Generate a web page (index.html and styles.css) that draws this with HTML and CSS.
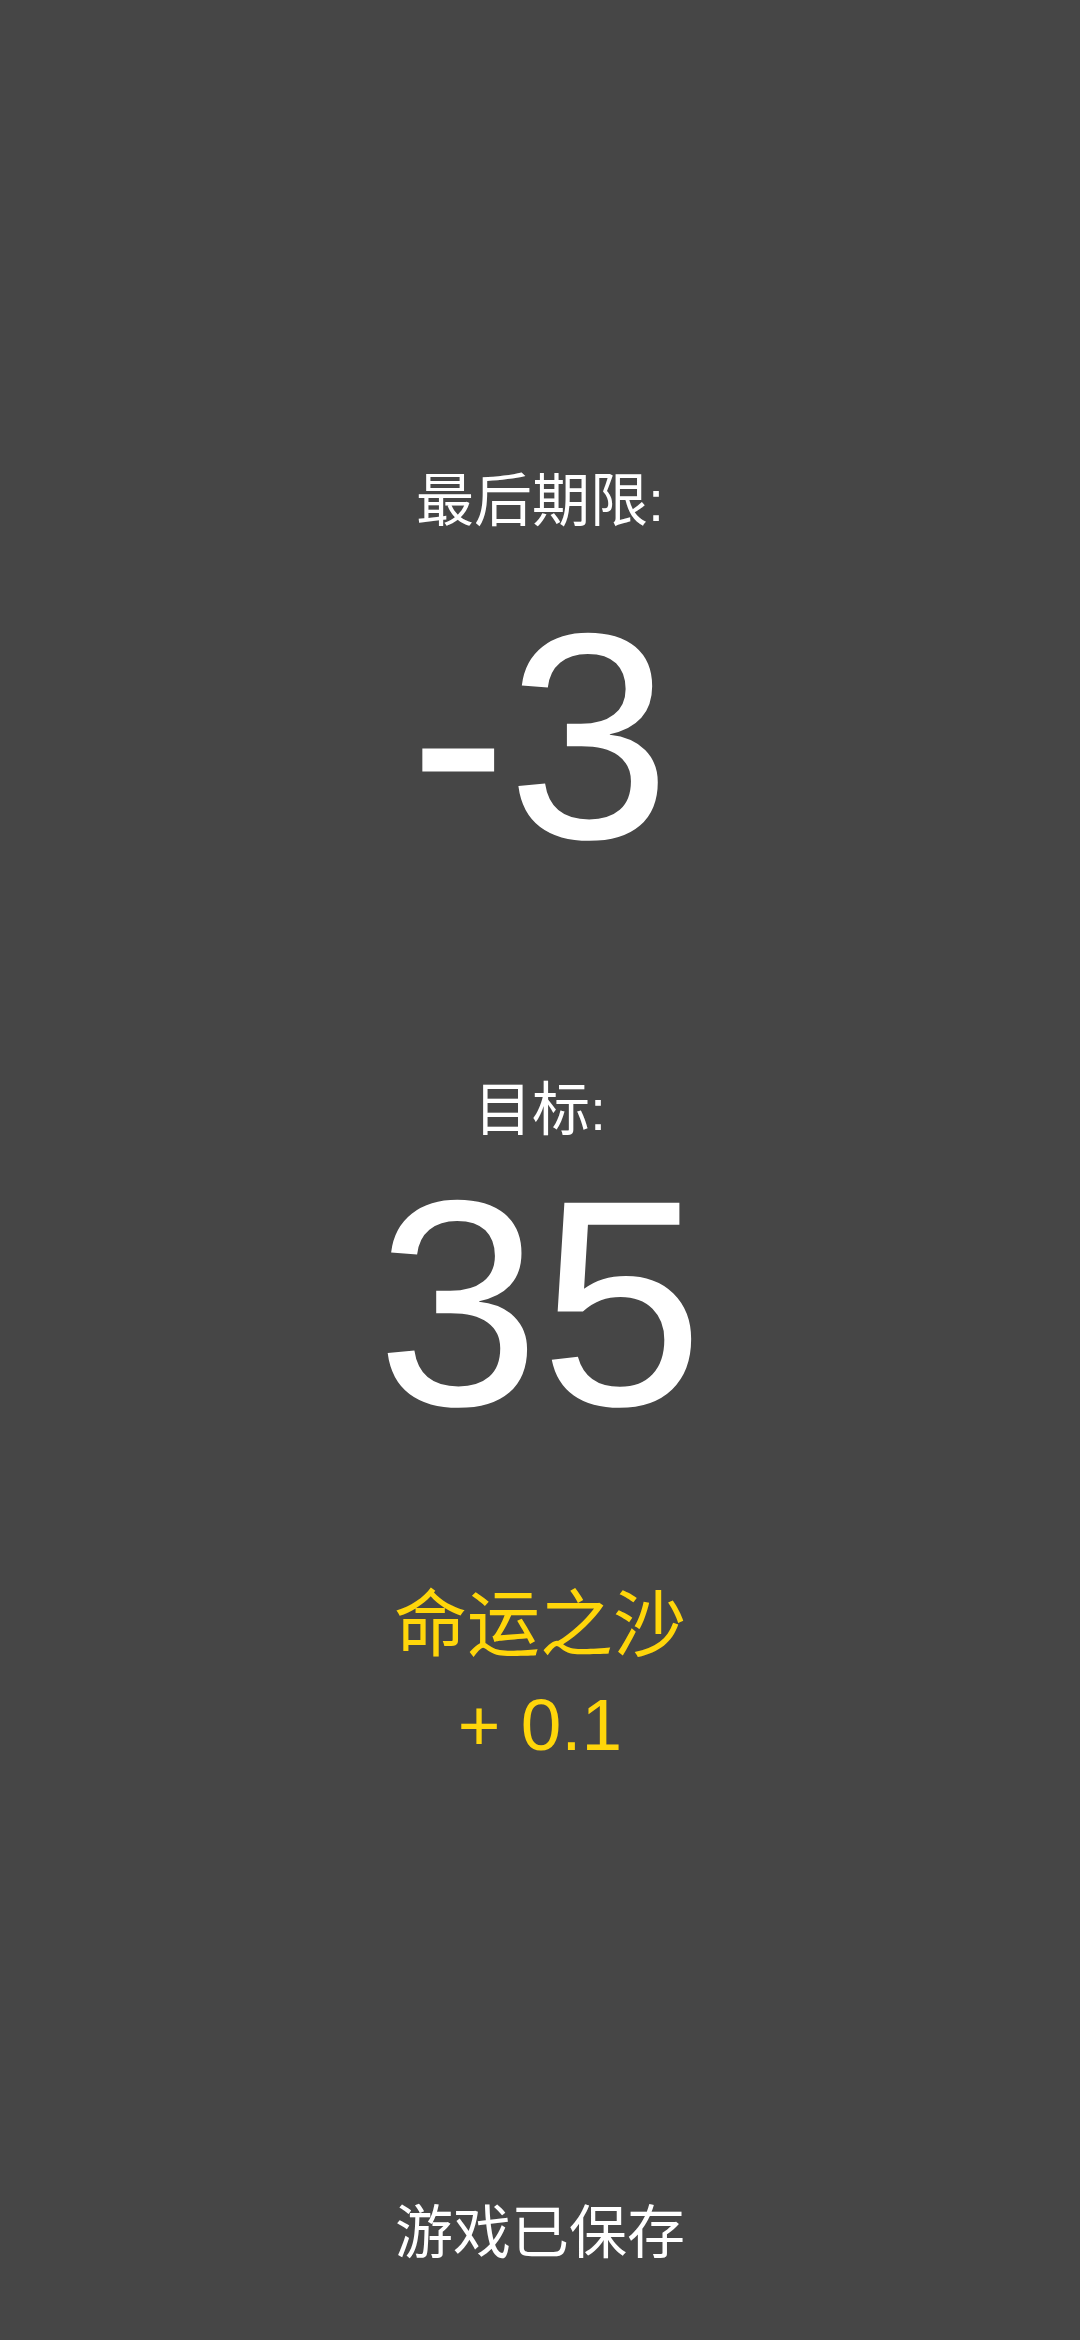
FILE: index.html
```html
<!DOCTYPE html>
<html lang="zh-CN">
<head>
    <meta charset="UTF-8">
    <meta name="viewport" content="width=device-width, initial-scale=1.0">
    <link rel="stylesheet" href="styles.css">
    <title>最后期限</title>
</head>
<body>
    <div class="screen">
        <!-- Deadline -->
        <div class="label deadline-label">最后期限:</div>
        <div class="big-number deadline-value">-3</div>

        <!-- Goal -->
        <div class="label goal-label">目标:</div>
        <div class="big-number goal-value">35</div>

        <!-- Bonus -->
        <div class="bonus bonus-name">命运之沙</div>
        <div class="bonus bonus-value">+ 0.1</div>

        <div class="label status">游戏已保存</div>
    </div>
</body>
</html>
```

FILE: styles.css
```css
body {
    font-family: 'Liberation Sans', 'Noto Sans CJK SC', sans-serif;
    margin: 0;
    padding: 0;
    background-color: #464646;
    color: #fff;
}

.screen {
    height: 2340px;
    display: flex;
    flex-direction: column;
    align-items: center;
    padding-bottom: 67px;
    box-sizing: border-box;
}

.label {
    font-size: 58px;
    line-height: 80px;
}

.big-number {
    font-size: 294px;
    line-height: 294px;
}

.bonus {
    font-size: 73px;
    line-height: 96px;
    color: #ffd60a;
}

.deadline-label {
    margin-top: 461px;
}

.deadline-value {
    margin-top: 48px;
}

.goal-label {
    margin-top: 187px;
}

.goal-value {
    margin-top: 6px;
}

.bonus-name {
    margin-top: 127px;
}

.bonus-value {
    margin-top: 4px;
}

.status {
    margin-top: auto;
}
```
